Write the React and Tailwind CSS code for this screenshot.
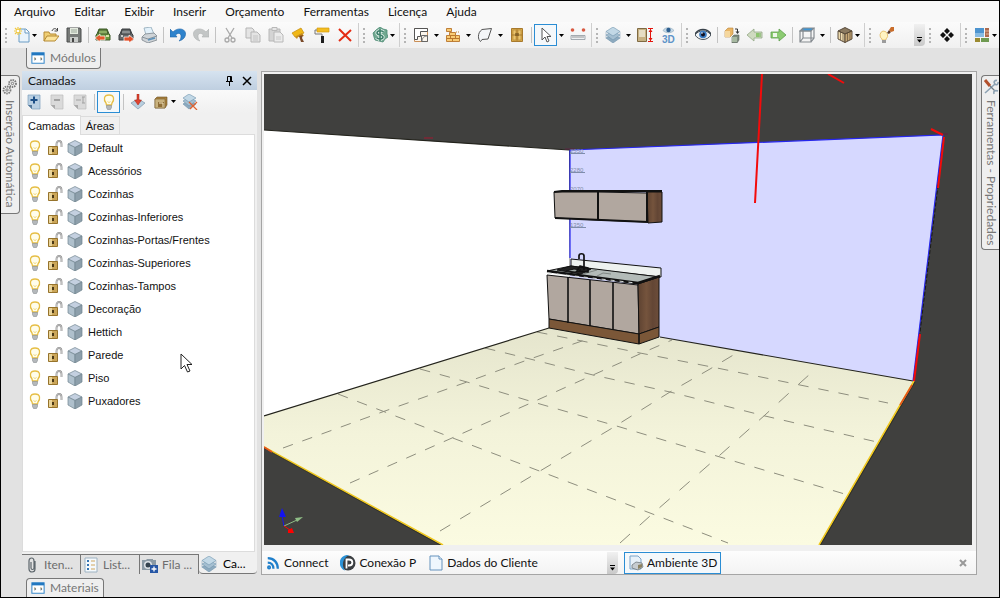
const MENU = ["Arquivo", "Editar", "Exibir", "Inserir", "Orçamento", "Ferramentas", "Licença", "Ajuda"];

const LAYERS = [
  "Default",
  "Acessórios",
  "Cozinhas",
  "Cozinhas-Inferiores",
  "Cozinhas-Portas/Frentes",
  "Cozinhas-Superiores",
  "Cozinhas-Tampos",
  "Decoração",
  "Hettich",
  "Parede",
  "Piso",
  "Puxadores",
];

// 16x16 drawings used by the toolbars, tabs and lists
const ICONS = {
  novo: (
    <>
      <path d="M5 2h7l3 3v10H5z" fill="#eaf4fb" stroke="#6a9cc4" />
      <path d="M11 2v4h4" fill="#fff" stroke="#6a9cc4" />
      <path d="M4 0v8M0 4h8M1 1l6 6M7 1L1 7" stroke="#f0c840" strokeWidth="1.2" />
      <circle cx="4" cy="4" r="1.3" fill="#fff" />
    </>
  ),
  abrir: (
    <>
      <path d="M1 14V5h5l1 2h6v3" fill="#f0cf74" stroke="#b58a35" />
      <path d="M1 14l3-5h12l-4 5z" fill="#fbe39a" stroke="#b58a35" />
      <path d="M9 4c1-3 4-3 5-1M14.500 1v3h-3" fill="none" stroke="#444" />
    </>
  ),
  salvar: (
    <>
      <path d="M1 1h13l1 1v13H1z" fill="#777a78" stroke="#4b4d4c" />
      <path d="M4 1h8v6H4z" fill="#e4eadf" />
      <path d="M5 3h6M5 5h6" stroke="#9aa79a" />
      <path d="M4 10h8v5H4z" fill="#c7cac8" />
      <path d="M6 11h2v4H6z" fill="#444" />
    </>
  ),
  importar: (
    <>
      <path d="M2 7l2-5h8l2 5 1 1v5H1V8z" fill="#6d9a3d" stroke="#3e5b2a" />
      <path d="M4 3h8l1 4H3z" fill="#8dae63" stroke="#3e5b2a" />
      <path d="M3 9h2M11 9h3" stroke="#d8e1a6" strokeWidth="2" />
      <path d="M0 11l5-4v2h5v4H5v2z" fill="#e45a2b" stroke="#fff" strokeWidth=".7" />
    </>
  ),
  exportar: (
    <>
      <path d="M2 7l2-5h8l2 5 1 1v5H1V8z" fill="#66696b" stroke="#3d4042" />
      <path d="M4 3h8l1 4H3z" fill="#8b8f91" stroke="#3d4042" />
      <path d="M3 9h2" stroke="#ccc" strokeWidth="2" />
      <path d="M16 12l-5-4v2H6v4h5v2z" fill="#e4512b" stroke="#fff" strokeWidth=".7" />
    </>
  ),
  imprimir: (
    <>
      <path d="M3 1l7-1 3 7-8 1z" fill="#e3f1fa" stroke="#8fa8b8" strokeWidth=".8" />
      <path d="M1 10l3-3 9-1 3 3v4l-9 3-6-3z" fill="#cfd4d8" stroke="#7d868d" strokeWidth=".8" />
      <path d="M1 10l6 2 9-3" fill="none" stroke="#8b949b" />
      <path d="M7 13l7-2" stroke="#5b92bb" strokeWidth="1.5" />
    </>
  ),
  desfazer: (
    <>
      <path d="M0 2v8h7L5.500 8c3-3 6-1.500 5.500 2-.3 2-1 3-2 4 4-1 7-4 6.500-8C14.500 1 7 .5 3 5z" fill="#2f83cc" stroke="#1f65a8" strokeWidth=".6" />
    </>
  ),
  refazer: (
    <>
      <path d="M16 2v8H9l1.500-2c-3-3-6-1.500-5.500 2 .3 2 1 3 2 4-4-1-7-4-6.500-8C1.500 1 9 .5 13 5z" fill="#c3c6c6" stroke="#aeb1b1" strokeWidth=".6" />
    </>
  ),
  recortar: (
    <g fill="none" stroke="#a9a9a9" strokeWidth="1.300">
      <path d="M4 1l6 10M12 1L6 11" />
      <circle cx="5" cy="13" r="2" />
      <circle cx="11" cy="13" r="2" />
    </g>
  ),
  copiar: (
    <g fill="#e4e4e4" stroke="#b5b5b5">
      <path d="M1 1h6l2 2v8H1z" />
      <path d="M6 5h6l3 3v7H6z" />
      <path d="M8 9h5M8 11h5M8 13h5" stroke="#c4c4c4" />
    </g>
  ),
  colar: (
    <g stroke="#b8b8b8">
      <path d="M1 2h11v12H1z" fill="#d4d4d4" />
      <path d="M4 .5h5v3H4z" fill="#e6e6e6" />
      <path d="M6 5h6l3 3v7H6z" fill="#ebebeb" />
      <path d="M8 10h5M8 12h5" stroke="#c8c8c8" />
    </g>
  ),
  pincel: (
    <>
      <path d="M1 6l9-5 3 5-9 4z" fill="#f0b817" stroke="#c48d10" strokeWidth=".7" />
      <path d="M4 10l7-4 2 3-6 1-1 2z" fill="#c98d1b" />
      <path d="M8 9l4-1-1 3 2 4h-3z" fill="#7a4a2a" />
    </>
  ),
  rolo: (
    <>
      <path d="M3 1h12v4H3z" fill="#f3bd20" stroke="#d49b12" strokeWidth=".7" />
      <path d="M3 3H1v4h7v3" fill="none" stroke="#777" />
      <path d="M7 9h3v7H7z" fill="#1e1e1e" />
    </>
  ),
  excluir: <path d="M2 2l12 12M14 3L2 14" stroke="#e42b13" strokeWidth="2" />,
  dinheiro: (
    <>
      <path d="M8 0l3 2 4 1v4l1 3-3 2-2 3-4-1-4-1-1-3-1-4 3-3z" fill="#70a890" stroke="#4c8a74" strokeWidth=".8" />
      <path d="M11.500 5C10 3 5 3.500 5 6s6 1.500 6 4-5 2.500-6.500.5M8 2v12" fill="none" stroke="#e8f4ee" strokeWidth="3.200" />
      <path d="M11.500 5C10 3 5 3.500 5 6s6 1.500 6 4-5 2.500-6.500.5M8 2v12" fill="none" stroke="#3e806b" strokeWidth="1.600" />
    </>
  ),
  paredes: (
    <g fill="none">
      <path d="M1.500 1.500h13v13h-13z" fill="#fbf5ec" stroke="#c98f58" />
      <path d="M1.500 12.500v-11h13v3h-7v5h-3v3z" fill="#fff" stroke="#555" />
      <path d="M8.500 14.500v-6h6v6z" stroke="#666" />
      <path d="M9 14c0-3 2-5 5-5" stroke="#888" />
    </g>
  ),
  tijolos: (
    <g fill="#f8cb74" stroke="#b8742a" strokeWidth=".9">
      <path d="M1.500 1.500h5v3h-5z" />
      <path d="M1.500 8.500h4v3h-4zM5.500 8.500h5v3h-5zM10.500 8.500h4v3h-4zM1.500 11.500h6v3h-6zM7.500 11.500h7v3h-7z" />
      <path d="M4.500 5.500h6v3h-6z" />
      <path d="M11 5h4" strokeDasharray="1 1" />
    </g>
  ),
  forma: <path d="M5 2.500L14.500 1.500 11 12l-6 .5-1.500 2C1 13 0 6 5 2.500z" fill="#f4f6f8" stroke="#555" />,
  porta: (
    <>
      <path d="M2.500 1.500h11v13h-11z" fill="#d9aa48" stroke="#a87a2e" />
      <path d="M4 3h3v10H4zM9 3h3v10H9z" fill="#ebc56e" stroke="#b58a3a" strokeWidth=".7" />
      <path d="M8 2v12M3 8h10" stroke="#a87a2e" />
      <path d="M7 6v3M9 6v3" stroke="#5f4316" />
    </>
  ),
  seta: <path d="M4 1v12l3-3 2 5 2-1-2-4.500h4z" fill="#fff" stroke="#555" />,
  regua: (
    <>
      <circle cx="2.500" cy="3" r="1.800" fill="#d95a42" />
      <circle cx="13.500" cy="3" r="1.800" fill="#d95a42" />
      <path d="M1 8.500h14v4H1z" fill="#eceff1" stroke="#8f989e" strokeWidth=".8" />
      <path d="M3 9v2M5 9v2M7 9v2M9 9v2M11 9v2M13 9v2" stroke="#777" strokeWidth=".7" />
    </>
  ),
  camadas: (
    <g stroke="#6f93ad" strokeWidth=".6">
      <path d="M1 11l7-4 7 4-7 5z" fill="#8eaabf" />
      <path d="M1 8l7-4 7 4-7 5z" fill="#a5bfd1" />
      <path d="M1 4.500L8 0l7 4.500L8 9z" fill="#c2d8e6" />
      <path d="M1 4.500v7M15 4.500v7" stroke="#8eaabf" />
    </g>
  ),
  altura: (
    <>
      <path d="M.5 1.500h9v13h-9z" fill="#c7b183" stroke="#7f6a42" />
      <path d="M2 3h6v7H2z" fill="#e6ddc4" />
      <path d="M11 1.500h5M11 14.500h5M13.500 2v12" stroke="#e3150d" />
      <path d="M13.500 2l2 3h-4zM13.500 14l2-3h-4z" fill="#e3150d" />
    </>
  ),
  eye3d: (
    <>
      <path d="M3 3.500C5-.2 11-.2 14 3.500 11 6.500 6 6.500 3 3.500z" fill="#c7dbe9" stroke="#8da6b7" strokeWidth=".6" />
      <circle cx="8.500" cy="3" r="2.200" fill="#2e5f8f" />
      <text x="2" y="15.500" fontSize="10" fontWeight="700" fill="#5e93c8" fontFamily="Liberation Sans, sans-serif">3D</text>
    </>
  ),
  olho: (
    <>
      <path d="M0 8c3-5 12-6 16 0-4 6-12 6-16 0z" fill="#f0f3f5" stroke="#4b545c" />
      <path d="M0 7C4 1 12 1 16 7" fill="none" stroke="#39424a" strokeWidth="1.500" />
      <circle cx="8" cy="7.500" r="3.800" fill="#3b7dc4" />
      <circle cx="8" cy="7.500" r="2" fill="#112" />
      <circle cx="7" cy="6" r=".8" fill="#fff" />
    </>
  ),
  girar: (
    <>
      <path d="M1 4l3-3h5v6l-3 3H1z" fill="#e9b565" stroke="#b98339" strokeWidth=".6" />
      <path d="M1 4h5v6H1z" fill="#f5d79e" />
      <path d="M8 10l2-2h5v5l-2 3H8z" fill="#7d8a7d" stroke="#5b655b" strokeWidth=".6" />
      <path d="M8 10h5v5H8z" fill="#a6b8a0" />
      <path d="M11 2h2.500v4" fill="none" stroke="#333" />
      <path d="M11.500 4.500h4l-2 2.500z" fill="#333" />
    </>
  ),
  voltar: (
    <>
      <path d="M0 8l7-6v3h8v6H7v3z" fill="#cfdac0" stroke="#93a886" strokeWidth=".8" />
      <path d="M9 6h3v4H9z" fill="#8cc46e" />
      <path d="M13 6v4" stroke="#6dad53" />
    </>
  ),
  avancar: (
    <>
      <path d="M16 8L9 2v3H1v6h8v3z" fill="#8ccb72" stroke="#5da04c" strokeWidth=".8" />
      <path d="M3 6h4v4H3z" fill="#eef6ea" />
    </>
  ),
  cubo: (
    <g fill="none" stroke="#858b90" strokeWidth="1.200">
      <path d="M1 4l3-3h11l-3 3z" fill="#3d96d6" />
      <path d="M1 4h11v11H1zM15 1v10l-3 4M4 2v9h11M4 11l-3 4" />
    </g>
  ),
  caixa: (
    <g stroke="#4d4030" strokeWidth=".9">
      <path d="M1 4l7-3.500L15 4 8 7z" fill="#8b7a60" />
      <path d="M1 4l7 3v8.500L1 12z" fill="#eddaae" />
      <path d="M15 4L8 7v8.500l7-3.500z" fill="#c5a775" />
      <path d="M3.500 5v8M6 6v8.500M10.500 6v8M13 5v8" strokeWidth=".6" />
    </g>
  ),
  luz: (
    <>
      <path d="M5 4a4.500 4.500 0 0 1 3 8v1H4v-1a4.500 4.500 0 0 1 1-8z" fill="#fff3c2" stroke="#e3b85a" strokeWidth=".8" />
      <path d="M4 13h4v3H4z" fill="#9b9b9b" />
      <path d="M9 6l2-3 2 2-2 2z" fill="#5a3a2a" />
      <path d="M11 3l2-3h4l-1 4-3 1z" fill="#c96d2b" />
    </>
  ),
  losangos: (
    <path d="M8 1l3 3-3 3-3-3zM8 9l3 3-3 3-3-3zM4 5l3 3-3 3-3-3zM12 5l3 3-3 3-3-3z" fill="#111" />
  ),
  blocos: (
    <>
      <path d="M1 1h9v9H1z" fill="#4d94cf" />
      <path d="M1 6h9v4H1z" fill="#88bbe2" />
      <path d="M11 1h4v9h-4z" fill="#ad6a4d" />
      <path d="M1 11h5v4H1z" fill="#9b8a30" />
      <path d="M7 11h8v4H7z" fill="#6f9a51" />
      <path d="M11 4h4M12 7h3" stroke="#e0b49b" />
    </>
  ),
  pagMais: (
    <>
      <path d="M2 1h12v14H6l-4-4z" fill="#b9cfe2" stroke="#7b9dbb" strokeWidth=".7" />
      <path d="M2 11h4v4z" fill="#54789a" />
      <path d="M8 2.500v7M4.500 6h7" stroke="#1d4f86" strokeWidth="2" />
    </>
  ),
  pagMenos: (
    <>
      <path d="M2 1h12v14H6l-4-4z" fill="#dadada" stroke="#bcbcbc" strokeWidth=".7" />
      <path d="M2 11h4v4z" fill="#aaa" />
      <path d="M5 6h6" stroke="#a2a2a2" strokeWidth="2" />
    </>
  ),
  pagNome: (
    <>
      <path d="M2 1h12v14H6l-4-4z" fill="#dadada" stroke="#bcbcbc" strokeWidth=".7" />
      <path d="M2 11h4v4z" fill="#aaa" />
      <path d="M4 6h5M11 3v6M10 3h3M10 9h3" stroke="#a2a2a2" />
    </>
  ),
  lampada: (
    <>
      <path d="M8 1c5.500 0 5.500 5 3 8l-.5 2h-5L5 9C2.500 6 2.500 1 8 1z" fill="#fffdea" stroke="#e6be45" strokeWidth="1.300" />
      <path d="M6.500 7l1.500 2 1.500-2" fill="none" stroke="#efd983" strokeWidth=".8" />
      <path d="M5.500 11.500h5v2l-1 2h-3l-1-2z" fill="#b4b8bb" stroke="#888d90" strokeWidth=".6" />
    </>
  ),
  inserirCamada: (
    <>
      <path d="M1 9l7-4 7 4-7 6z" fill="#b9cfdf" stroke="#8198aa" strokeWidth=".7" />
      <path d="M7 0h2v6h2.500L8 11 4.500 6H7z" fill="#e0432f" stroke="#a32516" strokeWidth=".5" />
    </>
  ),
  armario: (
    <>
      <path d="M2 5l2-2h10v8l-2 3H2z" fill="#a9803d" stroke="#6d5127" strokeWidth=".6" />
      <path d="M2 5h10v9H2z" fill="#c9b27e" stroke="#7b5f31" strokeWidth=".6" />
      <path d="M5 8h6v5H5z" fill="#8f6e38" />
      <path d="M6 9h4v4" fill="none" stroke="#f2e4bd" />
    </>
  ),
  camadasX: (
    <>
      <g stroke="#6f93ad" strokeWidth=".6">
        <path d="M1 10l6-4 7 4-7 5z" fill="#8eaabf" />
        <path d="M1 7l6-4 7 4-7 5z" fill="#a5bfd1" />
        <path d="M1 4l6-4 7 4-7 4z" fill="#c2d8e6" />
      </g>
      <path d="M7 8l8 8M15 8l-7 7" stroke="#e0622f" strokeWidth="1.200" />
    </>
  ),
  cadeado: (
    <>
      <path d="M9.500 7V4c0-4 5-4 5 0v3" fill="none" stroke="#8b8b8b" strokeWidth="1.800" />
      <path d="M9.500 7V4c0-4 5-4 5 0v3" fill="none" stroke="#e4e4e4" strokeWidth=".6" />
      <path d="M1.500 6.500h9v8h-9z" fill="#cba659" stroke="#96732b" />
      <path d="M2 7h3v7H2z" fill="#e9d49a" />
      <path d="M5 9h2v3H5z" fill="#4a3816" />
    </>
  ),
  bloco: (
    <g stroke="#71858f" strokeWidth=".7">
      <path d="M1 4l7-3.500L15 4 8 7.500z" fill="#c4d0e0" />
      <path d="M1 4l7 3.500V16l-7-4z" fill="#afc0cc" />
      <path d="M15 4L8 7.500V16l7-4z" fill="#8d9fab" />
    </g>
  ),
  janela: (
    <>
      <path d="M1 2h14v12H1z" fill="#fff" stroke="#3b8acb" strokeWidth="1.200" />
      <path d="M1 2h14v3H1z" fill="#2278c0" />
      <path d="M4 7l2 2-2 2zM11 7l2 2-2 2z" fill="#54646c" />
      <path d="M4 8h1M11 8h1" stroke="#d59c3c" />
    </>
  ),
  clipe: <path d="M11 4v8c0 4-6 4-6 0V4c0-4 5-4 5 0v7c0 2-3 2-3 0V5" fill="none" stroke="#5d666c" strokeWidth="1.200" />,
  lista: (
    <>
      <path d="M2 1h12v14H2z" fill="#f5f9fc" stroke="#9db2c2" />
      <path d="M4 3h2v2H4zM4 7h2v2H4zM4 11h2v2H4z" fill="#3574b4" />
      <path d="M8 4h4M8 8h4M8 12h4" stroke="#d0a65d" />
    </>
  ),
  foto: (
    <>
      <path d="M0 3h4l1-1h6v1h3v10H0z" fill="#8b9aa5" />
      <circle cx="6" cy="8" r="4" fill="#dde3e8" />
      <circle cx="6" cy="8" r="2.500" fill="#34434f" />
      <path d="M8 8h8v8H8z" fill="#2656a5" />
      <path d="M12 9.500v5M9.500 12h5" stroke="#fff" strokeWidth="1.300" />
    </>
  ),
  rss: (
    <g fill="none" stroke="#1f7fcb" strokeWidth="2.600">
      <path d="M2 2.500c7 0 11.500 5 11.500 12M2 7.500c4 0 6.500 3 6.500 7" />
      <circle cx="3.500" cy="13" r="1" />
    </g>
  ),
  conexao: (
    <>
      <circle cx="8" cy="8" r="7.500" fill="#3b3f42" />
      <path d="M9 0C-2-1-3 13 5 15.500 1 10 3 3 9 0z" fill="#2b93d8" />
      <path d="M6.500 13.500V4.500H9c4.500 0 4.500 6 0 6H8" fill="none" stroke="#fff" strokeWidth="1.800" />
    </>
  ),
  folha: (
    <>
      <path d="M2 1h9l3 3v11H2z" fill="#eef6fd" stroke="#6592bd" />
      <path d="M11 1v3h3" fill="#fff" stroke="#6592bd" />
    </>
  ),
  ambiente: (
    <>
      <path d="M2 1h8l3 3v10H2z" fill="#e7f1f9" stroke="#7ba3c7" />
      <path d="M4 10l4-3 6 1 1 4-5 3-6-2z" fill="#c6ccd0" stroke="#70787e" strokeWidth=".8" />
      <path d="M10 10l4-1v3l-4 2z" fill="#8c8261" />
    </>
  ),
  engrenagens: (
    <g fill="none" stroke="#7b7b7b">
      <circle cx="10.500" cy="4.500" r="3.500" strokeWidth="1.800" strokeDasharray="1.500 .8" />
      <circle cx="5" cy="11" r="3.500" strokeWidth="1.800" strokeDasharray="1.500 .8" />
      <circle cx="10.500" cy="4.500" r="1.200" />
      <circle cx="5" cy="11" r="1.200" />
    </g>
  ),
  chaves: (
    <g fill="none">
      <path d="M2 14L12 5M12 5c-2-2 0-4 2-3.500M12 5c1 1.500 3.500.5 3-2" stroke="#8da2b3" strokeWidth="1.600" />
      <path d="M2 1l5 6" stroke="#b2502c" strokeWidth="3" />
      <path d="M7 7l5 5" stroke="#6f7d88" strokeWidth="1.200" />
      <path d="M11 15c-1-3 1-4 4-3" stroke="#8da2b3" strokeWidth="1.600" />
    </g>
  ),
};

function Icon({ name, small }) {
  return (
    <svg viewBox="0 0 16 16" aria-hidden="true" className={small ? "size-[14px] shrink-0" : "size-4 shrink-0"}>
      {ICONS[name]}
    </svg>
  );
}

function Tool({ name, label, active, drop, tight }) {
  return (
    <>
      <button
        aria-label={label}
        className={
          "flex h-[22px] shrink-0 items-center " +
          (tight ? "w-[20px] justify-end " : "w-[23px] justify-center ") +
          (active ? "border border-[#2a8dd4] bg-[#f4f8fb]" : "")
        }
      >
        <Icon name={name} />
      </button>
      {drop && (
        <button aria-label={label + ", opções"} className="flex h-[22px] w-[9px] shrink-0 items-center justify-center">
          <svg viewBox="0 0 5 3" className="h-[3px] w-[5px]">
            <path d="M0 0h5L2.500 3z" fill="#000" />
          </svg>
        </button>
      )}
    </>
  );
}

const Sep = () => (
  <div className="flex w-[6px] shrink-0 justify-center">
    <div className="h-4 w-px bg-[#c3c3c3]" />
  </div>
);

const Grip = () => <div className="h-[15px] w-0 shrink-0 border-l-2 border-dotted border-[#b5b5b5]" />;

const GroupEnd = () => (
  <div className="flex w-3 shrink-0 items-center justify-between pr-[3px] pl-[2px]">
    <div className="h-6 w-px bg-[#cfcfcf]" />
    <Grip />
  </div>
);

function Overflow() {
  return (
    <button aria-label="Mais opções" className="flex h-[22px] w-[11px] shrink-0 items-end justify-center rounded-br bg-linear-to-b from-[#f1f1f1] to-[#c9c9c9] pb-[3px]">
      <svg viewBox="0 0 7 6" className="h-[6px] w-[7px]">
        <path d="M1 .5h5" stroke="#000" />
        <path d="M1 2.500h5L3.500 5.500z" fill="#000" />
      </svg>
    </button>
  );
}

function Toolbar() {
  return (
    <div className="flex h-[26px] shrink-0 items-center bg-linear-to-b from-[#fbfbfb] to-[#f0f0f0]">
      <div className="flex w-[9px] shrink-0 justify-center">
        <Grip />
      </div>
      <Tool name="novo" label="Novo" drop tight />
      <Tool name="abrir" label="Abrir" />
      <Tool name="salvar" label="Salvar" />
      <Sep />
      <Tool name="importar" label="Importar" />
      <Tool name="exportar" label="Exportar" />
      <Tool name="imprimir" label="Imprimir" />
      <Sep />
      <Tool name="desfazer" label="Desfazer" />
      <Tool name="refazer" label="Refazer" />
      <Sep />
      <Tool name="recortar" label="Recortar" />
      <Tool name="copiar" label="Copiar" />
      <Tool name="colar" label="Colar" />
      <Tool name="pincel" label="Pincel" />
      <Tool name="rolo" label="Pintar" />
      <Tool name="excluir" label="Excluir" />
      <GroupEnd />
      <Tool name="dinheiro" label="Orçamento" drop tight />
      <GroupEnd />
      <Tool name="paredes" label="Paredes" drop />
      <Tool name="tijolos" label="Alvenaria" drop />
      <Tool name="forma" label="Forma" drop />
      <Tool name="porta" label="Porta" />
      <Sep />
      <Tool name="seta" label="Selecionar" active drop />
      <Tool name="regua" label="Medir" />
      <GroupEnd />
      <Tool name="camadas" label="Camadas" drop />
      <Tool name="altura" label="Altura" />
      <Tool name="eye3d" label="Ver em 3D" />
      <GroupEnd />
      <Tool name="olho" label="Visualizar" />
      <Sep />
      <Tool name="girar" label="Girar" />
      <Tool name="voltar" label="Voltar" />
      <Tool name="avancar" label="Avançar" />
      <Sep />
      <Tool name="cubo" label="Vista" drop />
      <Sep />
      <Tool name="caixa" label="Textura" drop tight />
      <GroupEnd />
      <Tool name="luz" label="Iluminação" />
      <div className="flex-1" />
      <Overflow />
      <div className="flex w-[10px] shrink-0 justify-center">
        <Grip />
      </div>
      <Tool name="losangos" label="Mover" />
      <GroupEnd />
      <Tool name="blocos" label="Janelas" drop tight />
    </div>
  );
}

function LayersPanel() {
  return (
    <section className="flex w-[235px] shrink-0 flex-col">
      <div className="flex flex-1 flex-col bg-[#f0f0f0]">
        <header className="flex h-[19px] items-center bg-linear-to-b from-[#d6e3f0] to-[#bfcfe0] pr-[5px] pl-[6px]">
          <h2 className="flex-1">Camadas</h2>
          <button aria-label="Fixar" className="mr-2">
            <svg viewBox="0 0 9 11" className="h-[11px] w-[9px]" fill="none" stroke="#000">
              <path d="M2.500 6V1.500h4V6M5.500 1.500V6M1 6.500h7M4.500 6.500V11" />
            </svg>
          </button>
          <button aria-label="Fechar">
            <svg viewBox="0 0 10 10" className="size-[10px]" stroke="#000" strokeWidth="1.500">
              <path d="M1 1l8 8M9 1L1 9" />
            </svg>
          </button>
        </header>
        <div className="flex h-[23px] items-center bg-linear-to-b from-[#fafafa] to-[#f0f0f0]">
          <Tool name="pagMais" label="Nova camada" />
          <Tool name="pagMenos" label="Remover camada" />
          <Tool name="pagNome" label="Renomear camada" />
          <Sep />
          <Tool name="lampada" label="Mostrar tudo" active />
          <Sep />
          <Tool name="inserirCamada" label="Mover para camada" />
          <Tool name="armario" label="Módulos" drop tight />
          <Tool name="camadasX" label="Limpar camadas" />
        </div>
        <div className="z-10 flex h-[21px] items-end font-['Liberation_Sans',Arial,sans-serif] text-[11px]">
          <button className="-mb-px h-5 w-[59px] border border-b-0 border-[#dcdcdc] bg-white">Camadas</button>
          <button className="h-[18px] w-[39px] border border-b-0 border-l-0 border-[#dcdcdc]">Áreas</button>
        </div>
        <div className="relative mr-[2px] mb-[2px] flex-1 border border-[#dcdcdc] bg-white pt-px font-['Liberation_Sans',Arial,sans-serif] text-[11px]">
          <ul>
            {LAYERS.map((name) => (
              <li key={name} className="flex h-[23px] items-center gap-1 pl-1">
                <Icon name="lampada" />
                <Icon name="cadeado" />
                <Icon name="bloco" />
                <span className="pl-px">{name}</span>
              </li>
            ))}
          </ul>
          <svg viewBox="0 0 13 20" className="absolute top-[218px] left-[157px] h-5 w-[13px]">
            <path d="M1 1v15l3.500-3.500L7.500 19l2.500-1-3-6.500h5z" fill="#fff" stroke="#222" />
          </svg>
        </div>
      </div>
      <nav className="mb-px flex h-5 text-[#6d6d6d]">
        {[
          ["clipe", "Iten..."],
          ["lista", "List..."],
          ["foto", "Fila ..."],
        ].map(([icon, text]) => (
          <button key={text} className="flex flex-1 items-center gap-1 border-t border-r border-[#777] pl-[2px]">
            <Icon name={icon} />
            {text}
          </button>
        ))}
        <button className="flex w-[58px] items-center gap-[6px] rounded-b border-b border-[#777] bg-[#f0f0f0] pl-[2px] text-black">
          <Icon name="camadas" />
          Ca...
        </button>
      </nav>
    </section>
  );
}

// Perspective view of the kitchen
function Scene() {
  return (
    <svg viewBox="264 74 708 471" preserveAspectRatio="xMidYMid slice" className="min-h-0 w-full flex-1" role="img" aria-label="Ambiente 3D">
      <defs>
        <linearGradient id="floor" x1="0" y1="0" x2="0" y2="1">
          <stop offset="0" stopColor="#e4e4cc" />
          <stop offset=".5" stopColor="#f3f3da" />
          <stop offset="1" stopColor="#fbfbe1" />
        </linearGradient>
        <linearGradient id="wood" x1="0" y1="0" x2="1" y2="0">
          <stop offset="0" stopColor="#5d4231" />
          <stop offset=".4" stopColor="#75543d" />
          <stop offset=".7" stopColor="#634635" />
          <stop offset="1" stopColor="#6d4e3a" />
        </linearGradient>
      </defs>
      <path d="M264 74h708v471H264z" fill="#40403e" />
      <path d="M264 130l305 20 1 180-306 86z" fill="#fff" />
      <path d="M570 150l373-15-30 246-343-50z" fill="#d6d8ff" />
      <path d="M264 416l285-88 21-6 344 59-95 164H443l-179-98z" fill="url(#floor)" />

      <g fill="none" stroke="#8e8e7e" strokeDasharray="10.500 10">
        <path d="M283 448l102-37 82-29 63-23 52-18 10-3" />
        <path d="M350 483l102-45 81-36 60-27 49-22 30-13" />
        <path d="M440 531l100-60 69-41 61-38 40-23 30-18" strokeDasharray="12 11.500" />
        <path d="M620 543l30-27 70-61 45-40 35-32 10-9" strokeDasharray="13.500 13" />
        <path d="M537 332l45 9 58 12 77 15 83 17 88 18" />
        <path d="M485 348l45 11 63 16 77 17 95 24 112 26" />
        <path d="M420 369l47 13 66 20 87 25 100 30 128 38" />
        <path d="M338 394l47 18 73 28 84 32 108 41 78 30" />
      </g>

      <g fill="none">
        <path d="M264 130l305 20M264 416l285-88M660 337l253 44" stroke="#23231c" strokeWidth="1.200" />
        <path d="M264 447l179 98M914 381l-95 164" stroke="#f0c81e" strokeWidth="1.600" />
        <path d="M264 448l178 98M915 382l-95 164" stroke="#2a2a20" strokeWidth=".7" />
        <path d="M570 150v108M570 150l373-15-30 246" stroke="#2626ee" strokeWidth="1.200" />
        <path d="M944 137l-30 244" stroke="#191919" strokeDasharray="4 2" />
        <path d="M762 74l-7 129M828 74l16 9M931 129l12 6M944 137l-6 51M920 334l-6 47" stroke="#f30b0b" strokeWidth="2" />
        <path d="M912 385l-12 20M264 447l8 5" stroke="#e8541b" strokeWidth="1.500" />
        <path d="M943 134h5M565 149h10" stroke="#5b2340" />
        <path d="M424 138h9" stroke="#a01830" />
      </g>

      <g fill="#7f8cab" fontSize="6" fontFamily="Liberation Sans, sans-serif" stroke="none">
        <text x="570" y="153">2550</text>
        <text x="570" y="172">2280</text>
        <text x="570" y="191">2070</text>
        <text x="570" y="227">1350</text>
        <path d="M570 153h15v1h-15zM570 172h15v1h-15zM570 227h16v1h-16z" />
      </g>

      {/* wall cabinet */}
      <g stroke="#111" strokeLinejoin="round">
        <path d="M554 192h44v28l-43-2z" fill="#b1a79f" />
        <path d="M598 192l49 1v29l-49-2z" fill="#b1a79f" />
        <path d="M647 192h15v30l-14 1z" fill="url(#wood)" />
        <path d="M554 192l8-1h100M598 191v30M555 218l93 4M647 192v31" fill="none" strokeWidth="2" />
      </g>

      {/* base cabinet, worktop and sink */}
      <g stroke="#111" strokeLinejoin="round">
        <path d="M571 259l90 9v9l-90-10z" fill="#eef2f0" />
        <path d="M547 271l24-5 89 11-22 7z" fill="#b3bbb8" />
        <path d="M547 275l91 10 1 49-90-15z" fill="#b1a79f" />
        <path d="M638 284l21-7v50l-20 7z" fill="url(#wood)" />
        <path d="M549 319l90 15 20-7v10l-20 7-90-16z" fill="#7b5738" />
        <path d="M568 277v46M590 280v46M613 282v48M639 334v10" fill="none" strokeWidth="1.600" />
        <path d="M547 271l91 12 22-7" fill="none" strokeWidth="2.500" />
        <path d="M548 273l88 10" fill="none" stroke="#d9dfdc" strokeDasharray="4 5" />
        <path d="M557 270l14-4 20 3-10 5z" fill="#222" />
        <path d="M566 271l8-2 7 1-6 2z" fill="#9aa3a0" />
        <path d="M583 274l14-4M597 276l6-3 8 1" stroke="#68706c" strokeWidth=".7" fill="none" />
        <path d="M584 270v-14c0-3-5-3-5 0v3M577 271l3-5 8 2v4z" fill="none" strokeWidth="1.700" />
      </g>

      {/* axes */}
      <path d="M284 526l-2-10" stroke="#1414f0" />
      <path d="M282 508l4 9h-7z" fill="#1414f0" />
      <path d="M284 526l13-6" stroke="#8fbd86" />
      <path d="M303 517l-6 5-2-4z" fill="#8fbd86" />
      <path d="M284 526l6 4" stroke="#f00" />
      <path d="M288 530l4-2 2 5h-6z" fill="#f00" />
    </svg>
  );
}

export default function App() {
  return (
    <div className="flex h-screen flex-col overflow-hidden border border-black bg-[#e2e2e2] font-[Lato,'Open_Sans',sans-serif] text-[12px] leading-4 text-[#111]">
      <nav className="flex h-[21px] shrink-0 items-center gap-[19px] bg-[#f8f8f8] pl-[13px]">
        {MENU.map((item) => (
          <button key={item}>{item}</button>
        ))}
      </nav>
      <Toolbar />

      <div className="flex h-[23px] shrink-0 items-start pl-[25px]">
        <button className="flex h-[21px] items-center gap-[5px] rounded-b border border-t-0 border-[#777] bg-[#efefef] px-[4px] text-[#777]">
          <Icon name="janela" small />
          Módulos
        </button>
      </div>

      <main className="flex min-h-0 flex-1">
        <aside className="w-[21px] shrink-0 pt-1">
          <button className="flex h-[139px] w-[19px] items-center gap-[5px] rounded-r border border-l-0 border-[#777] bg-[#efefef] pt-[3px] whitespace-nowrap text-[#777] [writing-mode:vertical-rl]">
            <Icon name="engrenagens" />
            <span>Inserção Automática</span>
          </button>
        </aside>

        <LayersPanel />

        <section className="ml-1 flex min-w-0 flex-1 flex-col border border-[#a5a5a5] bg-[#f0f0f0]">
          <div className="flex min-h-0 flex-1 pt-[2px] pr-1 pl-[2px]">
            <Scene />
          </div>
          <div className="mt-[6px] flex h-[23px] shrink-0 items-center bg-linear-to-b from-[#fdfdfd] to-[#f3f3f3] pl-1">
            <button className="flex items-center gap-1">
              <Icon name="rss" small />
              Connect
            </button>
            <button className="ml-3 flex items-center gap-[3px]">
              <Icon name="conexao" />
              Conexão P
            </button>
            <button className="ml-3 flex items-center gap-[3px]">
              <Icon name="folha" />
              Dados do Cliente
            </button>
            <div className="flex flex-1 items-center">
              <div className="flex-1" />
              <Overflow />
            </div>
            <div className="flex w-[358px] shrink-0 items-center pl-[6px]">
              <button className="flex h-[22px] items-center gap-[3px] border border-[#2a8dd4] bg-[#f4f8fb] px-[3px]">
                <Icon name="ambiente" />
                Ambiente 3D
              </button>
              <div className="flex-1" />
              <button aria-label="Fechar aba" className="mr-[9px]">
                <svg viewBox="0 0 8 8" className="size-2" stroke="#999" strokeWidth="2">
                  <path d="M1 1l6 6M7 1L1 7" />
                </svg>
              </button>
            </div>
          </div>
        </section>

        <aside className="flex w-[22px] shrink-0 justify-end pt-1">
          <button className="flex h-[175px] w-[18px] items-center gap-[5px] rounded-l border border-r-0 border-[#777] bg-[#efefef] pt-[3px] whitespace-nowrap text-[#777] [writing-mode:vertical-rl]">
            <Icon name="chaves" />
            <span>Ferramentas - Propriedades</span>
          </button>
        </aside>
      </main>

      <div className="flex h-[22px] shrink-0 items-end pl-[25px]">
        <button className="flex h-[19px] items-center gap-[5px] rounded-t border border-b-0 border-[#777] bg-[#efefef] px-[4px] text-[#777]">
          <Icon name="janela" small />
          Materiais
        </button>
      </div>
    </div>
  );
}
